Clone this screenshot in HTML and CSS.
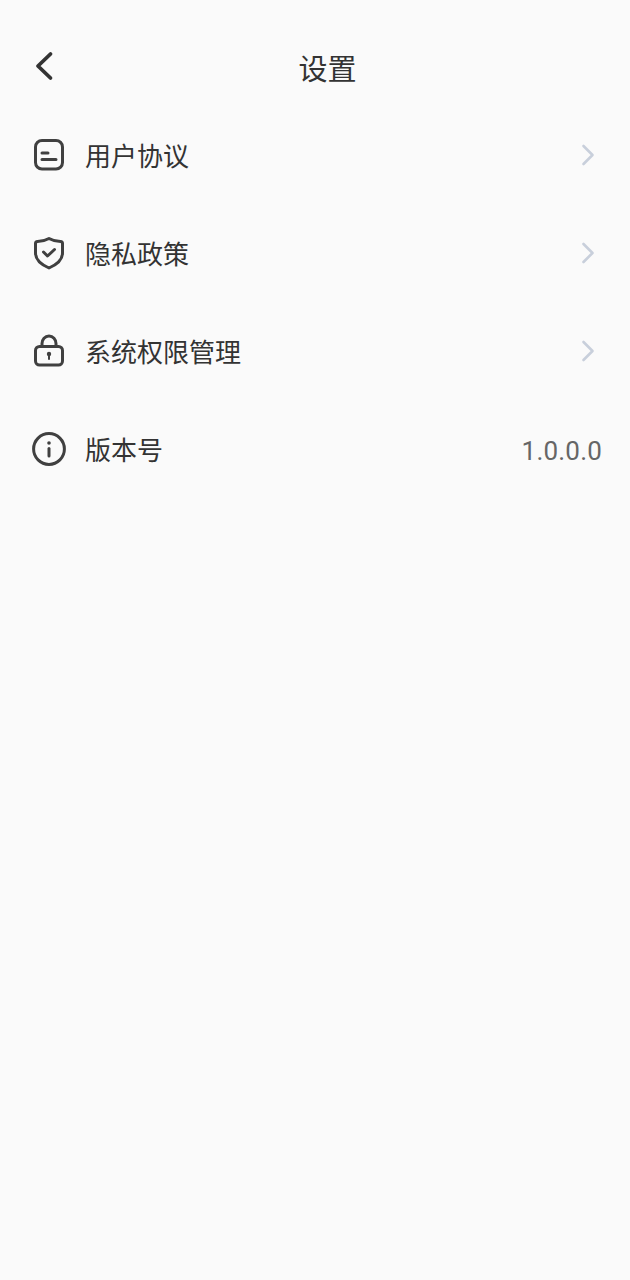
FILE: index.html
```html
<!DOCTYPE html>
<html lang="zh-CN">
<head>
  <meta charset="UTF-8">
  <meta name="viewport" content="width=device-width, initial-scale=1.0">
  <title>设置</title>
  <link rel="stylesheet" href="styles.css">
</head>
<body>
  <!-- Header -->
  <div class="header">
    <svg class="back-icon" width="20" height="30" viewBox="0 0 20 30">
      <path d="M16.5 3 L4 15 L16.5 27" />
    </svg>
    <h1 class="title">设置</h1>
  </div>

  <!-- Settings list -->
  <div class="list">
    <div class="row">
      <svg class="row-icon" width="34" height="34" viewBox="0 0 34 34">
        <rect x="3.5" y="2.5" width="27" height="28.5" rx="6.5" />
        <path d="M10 15 H16 M10 21.5 H24" />
      </svg>
      <span class="row-label">用户协议</span>
      <svg class="arrow-icon" width="14" height="22" viewBox="0 0 14 22">
        <path d="M2.5 2 L11.5 11 L2.5 20" />
      </svg>
    </div>

    <div class="row">
      <svg class="row-icon" width="34" height="34" viewBox="0 0 34 34">
        <path d="M17 2.5 C20.5 4.5 24 5.5 28.5 5.5 C29.8 5.5 30.5 6.2 30.5 7.5 V17 C30.5 23.5 25 28.5 17 32 C9 28.5 3.5 23.5 3.5 17 V7.5 C3.5 6.2 4.2 5.5 5.5 5.5 C10 5.5 13.5 4.5 17 2.5 Z" />
        <path d="M11.5 16 L15.5 20 L22.5 13.5" />
      </svg>
      <span class="row-label">隐私政策</span>
      <svg class="arrow-icon" width="14" height="22" viewBox="0 0 14 22">
        <path d="M2.5 2 L11.5 11 L2.5 20" />
      </svg>
    </div>

    <div class="row">
      <svg class="row-icon" width="34" height="34" viewBox="0 0 34 34">
        <rect x="3.5" y="12.5" width="27" height="18.5" rx="4" />
        <path d="M10 12.5 V9.5 C10 5.5 13 2 17 2 C21 2 24 5.5 24 9.5 V12.5" />
        <circle class="fill" cx="17" cy="20" r="2.2" />
        <path class="thin" d="M17 20 V25" />
      </svg>
      <span class="row-label">系统权限管理</span>
      <svg class="arrow-icon" width="14" height="22" viewBox="0 0 14 22">
        <path d="M2.5 2 L11.5 11 L2.5 20" />
      </svg>
    </div>

    <div class="row">
      <svg class="row-icon" width="34" height="34" viewBox="0 0 34 34">
        <circle cx="17" cy="17" r="15.4" />
        <circle class="fill" cx="17" cy="11" r="1.8" />
        <path d="M17 16.5 V24" />
      </svg>
      <span class="row-label">版本号</span>
      <span class="row-value">1.0.0.0</span>
    </div>
  </div>
</body>
</html>
```

FILE: styles.css
```css
body {
  margin: 0;
  background: #fafafa;
  color: #333333;
  font-family: Roboto, "Noto Sans CJK SC", sans-serif;
}

.header {
  display: flex;
  align-items: center;
  height: 74px;
  padding: 30px 0 2px 34px;
}

.back-icon {
  flex: none;
  margin-top: -3px;
}

.back-icon path {
  fill: none;
  stroke: #333333;
  stroke-width: 3.8;
  stroke-linecap: round;
  stroke-linejoin: round;
}

.title {
  margin: 0 0 0 244.5px;
  font-size: 29px;
  font-weight: 400;
}

.row {
  display: flex;
  align-items: center;
  height: 98px;
  padding: 0 28px 0 32px;
}

.row-icon {
  flex: none;
  margin-right: 19px;
}

.row-icon rect,
.row-icon path,
.row-icon circle {
  fill: none;
  stroke: #404040;
  stroke-width: 3;
  stroke-linecap: round;
  stroke-linejoin: round;
}

.row-icon .fill {
  fill: #404040;
  stroke: none;
}

.row-icon .thin {
  stroke-width: 2;
}

.row-label {
  flex: 1;
  padding-bottom: 2px;
  font-size: 26px;
}

.arrow-icon {
  flex: none;
  margin-right: 7px;
}

.arrow-icon path {
  fill: none;
  stroke: #c8cfdb;
  stroke-width: 2.6;
  stroke-linecap: round;
  stroke-linejoin: round;
}

.row-value {
  padding-top: 3px;
  font-size: 26px;
  letter-spacing: 0.2px;
  color: #666666;
}
```
